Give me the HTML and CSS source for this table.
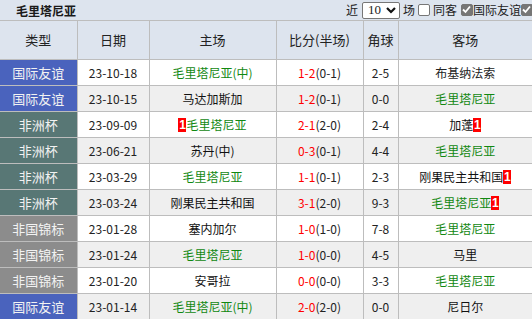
FILE: index.html
```html
<!DOCTYPE html>
<html lang="zh">
<head>
<meta charset="utf-8">
<link rel="stylesheet" href="styles.css">
</head>
<body>
<div class="bar">
  <div class="title">毛里塔尼亚</div>
  <div class="ctrl">
    <span class="lbl w1">近</span>
    <span class="sel">10<svg width="10" height="8" viewBox="0 0 10 8"><path d="M1 2 L5 6 L9 2" fill="none" stroke="#111" stroke-width="2.2"/></svg></span>
    <span class="lbl w1 l2">场</span>
    <span class="cb c-a"></span>
    <span class="lbl w2 l3">同客</span>
    <span class="cb on c-b"><svg width="11" height="11" viewBox="0 0 11 11"><path d="M2 5.5 L4.5 8 L9 2.5" fill="none" stroke="#fff" stroke-width="1.8"/></svg></span>
    <span class="lbl w4">国际友谊</span>
    <span class="cb on c-c"><svg width="11" height="11" viewBox="0 0 11 11"><path d="M2 5.5 L4.5 8 L9 2.5" fill="none" stroke="#fff" stroke-width="1.8"/></svg></span>
  </div>
</div>
<table class="tbl">
  <colgroup>
    <col class="c1"><col class="c2"><col class="c3"><col class="c4"><col class="c5"><col class="c6">
  </colgroup>
  <thead>
    <tr><th>类型</th><th>日期</th><th>主场</th><th>比分(半场)</th><th>角球</th><th>客场</th></tr>
  </thead>
  <tbody>
    <tr><td class="t intl">国际友谊</td><td>23-10-18</td><td class="g">毛里塔尼亚(中)</td><td><span class="r">1-2</span>(0-1)</td><td>2-5</td><td>布基纳法索</td></tr>
    <tr><td class="t intl">国际友谊</td><td>23-10-15</td><td class="k">马达加斯加</td><td><span class="r">1-2</span>(0-1)</td><td>0-0</td><td class="g">毛里塔尼亚</td></tr>
    <tr><td class="t afr">非洲杯</td><td>23-09-09</td><td class="g"><span class="badge">1</span>毛里塔尼亚</td><td><span class="r">2-1</span>(2-0)</td><td>2-4</td><td class="k">加蓬<span class="badge">1</span></td></tr>
    <tr><td class="t afr">非洲杯</td><td>23-06-21</td><td class="k">苏丹(中)</td><td><span class="r">0-3</span>(0-1)</td><td>4-4</td><td class="g">毛里塔尼亚</td></tr>
    <tr><td class="t afr">非洲杯</td><td>23-03-29</td><td class="g">毛里塔尼亚</td><td><span class="r">1-1</span>(0-1)</td><td>2-3</td><td class="k">刚果民主共和国<span class="badge">1</span></td></tr>
    <tr><td class="t afr">非洲杯</td><td>23-03-24</td><td class="k">刚果民主共和国</td><td><span class="r">3-1</span>(2-0)</td><td>9-3</td><td class="g">毛里塔尼亚<span class="badge">1</span></td></tr>
    <tr><td class="t chan">非国锦标</td><td>23-01-28</td><td class="k">塞内加尔</td><td><span class="r">1-0</span>(1-0)</td><td>7-8</td><td class="g">毛里塔尼亚</td></tr>
    <tr><td class="t chan">非国锦标</td><td>23-01-24</td><td class="g">毛里塔尼亚</td><td><span class="r">1-0</span>(0-0)</td><td>4-5</td><td class="k">马里</td></tr>
    <tr><td class="t chan">非国锦标</td><td>23-01-20</td><td class="k">安哥拉</td><td><span class="r">0-0</span>(0-0)</td><td>3-3</td><td class="g">毛里塔尼亚</td></tr>
    <tr><td class="t intl">国际友谊</td><td>23-01-14</td><td class="g">毛里塔尼亚(中)</td><td><span class="r">2-0</span>(2-0)</td><td>0-0</td><td class="k">尼日尔</td></tr>
  </tbody>
</table>
</body>
</html>
```
FILE: styles.css
```css
* { box-sizing: border-box; }
html, body {
  margin: 0;
  padding: 0;
  width: 532px;
  height: 319px;
  overflow: hidden;
  background: #fff;
  font-family: "Noto Sans CJK SC", "Liberation Sans", sans-serif;
  font-size: 12px;
  color: #222;
}
.bar {
  height: 21px;
  width: 532px;
  background: #dde4ee;
  display: flex;
  align-items: center;
  white-space: nowrap;
  overflow: hidden;
  border-bottom: 1px solid #bdbdbd;
}
.title {
  width: 346px;
  flex: none;
  padding-left: 16px;
  font-weight: bold;
  font-size: 12px;
  color: #1a1a1a;
}
.ctrl {
  display: flex;
  align-items: center;
  flex: none;
  width: 190px;
  font-size: 12px;
  line-height: 14px;
  color: #222;
}
.lbl { flex: none; display: block; overflow: visible; }
.w1 { width: 12px; }
.w2 { width: 24px; }
.w4 { width: 48px; }
.l2 { margin-left: 3px; }
.l3 { margin-left: 3px; }
.sel {
  display: flex;
  flex: none;
  align-items: center;
  justify-content: space-between;
  width: 38px;
  height: 17px;
  margin-left: 4px;
  background: #fff;
  border: 1px solid #777;
  border-radius: 2px;
  padding: 0 3px 0 5px;
  font-family: "Liberation Serif", serif;
  font-size: 13px;
}
.cb {
  display: block;
  flex: none;
  width: 12px;
  height: 12px;
  border: 1px solid #777;
  border-radius: 2px;
  background: #fff;
}
.c-a { margin-left: 3px; }
.c-b { margin-left: 4px; margin-right: 0; }
.c-c { margin-left: 0; }
.cb.on {
  background: #767676;
  border-color: #767676;
}
.cb svg { display: block; margin: -1px 0 0 -1px; }
.tbl {
  border-collapse: collapse;
  table-layout: fixed;
  width: 532px;
}
.c1 { width: 77px; }
.c2 { width: 72px; }
.c3 { width: 127px; }
.c4 { width: 87px; }
.c5 { width: 35px; }
.c6 { width: 134px; }
.tbl th, .tbl td {
  border: 1px solid #bdbdbd;
  text-align: center;
  padding: 0;
  white-space: nowrap;
  overflow: hidden;
}
.tbl th:first-child, .tbl td:first-child { border-left: none; }
.tbl th:last-child, .tbl td:last-child { border-right: none; }
.tbl thead tr { height: 38px; }
.tbl th {
  background: #dde4ee;
  font-weight: normal;
  font-size: 13px;
  color: #222;
  border-top: none;
}
.tbl tbody tr { height: 26px; }
.tbl tbody tr:nth-child(even) td { background: #efefef; }
.tbl td { font-size: 12px; color: #222; }
.tbl td.t { color: #f2f2f2; font-size: 13px; }
.tbl tbody tr td.intl { background: #4a63bd; }
.tbl tbody tr td.afr { background: #587775; }
.tbl tbody tr td.chan { background: #8c8c8c; }
.g { color: #118811 !important; }
.k { color: #111 !important; }
.r { color: #f00; }
.badge {
  display: inline-block;
  background: #f00;
  color: #fff;
  font-weight: bold;
  font-family: "Liberation Sans", sans-serif;
  font-size: 12px;
  width: 8px;
  height: 14px;
  line-height: 14px;
  vertical-align: middle;
  text-align: center;
  margin-top: -2px;
}
```
